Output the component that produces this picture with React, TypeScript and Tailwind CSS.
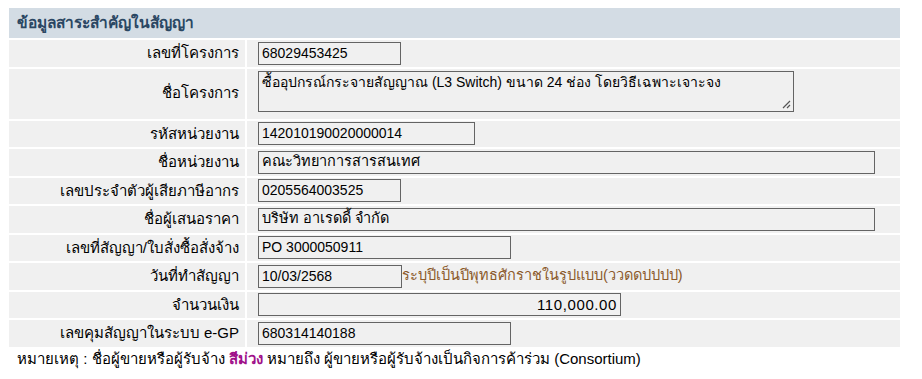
import React from "react";

const font = { fontFamily: '"Liberation Sans", Tahoma, sans-serif' };

function Row({label, children, tall}: {label: string; children: React.ReactNode; tall?: boolean}) {
  return (
    <div className={`grid grid-cols-[236px_1fr] gap-x-[2px] ${tall ? "h-[50px]" : "h-[26.5px]"}`}>
      <div className="bg-[#f0f0f0] flex items-center justify-end pr-[6px] text-[15px] text-black">{label}</div>
      <div className={`bg-[#f0f0f0] flex pl-[11px] ${tall ? "items-start pt-[2px]" : "items-center"}`}>{children}</div>
    </div>
  );
}

function Field({value, w, right, thai}: {value: string; w: string; right?: boolean; thai?: boolean}) {
  return (
    <div
      className={`${w} h-[23px] border border-[#646464] bg-[#f0f0f0] px-[3px] flex items-center ${thai ? "text-[14.5px]" : "text-[14px]"} ${right ? "justify-end" : ""}`}
    >
      {value}
    </div>
  );
}

export default function App() {
  return (
    <div className="bg-white w-[922px] h-[379px] pt-[8px] pl-[9px] text-[14px] text-black" style={font}>
      <div className="w-[891px] flex flex-col gap-y-[2px]">
        <div className="h-[30px] bg-[#d3dce4] flex items-center pl-[8px] font-bold text-[15.5px] text-[#2b4763]">
          ข้อมูลสาระสำคัญในสัญญา
        </div>
        <Row label="เลขที่โครงการ">
          <Field value="68029453425" w="w-[143px]" />
        </Row>
        <Row label="ชื่อโครงการ" tall>
          <div className="relative w-[536px] h-[41px] border border-[#646464] bg-[#f0f0f0] px-[3px] pt-[1px] leading-[18px]">
            ซื้ออุปกรณ์กระจายสัญญาณ (L3 Switch) ขนาด 24 ช่อง โดยวิธีเฉพาะเจาะจง
            <svg className="absolute right-[2px] bottom-[2px]" width="9" height="9" viewBox="0 0 9 9">
              <path d="M8 1L1 8M8 5L5 8" stroke="#555" strokeWidth="1.2" />
            </svg>
          </div>
        </Row>
        <Row label="รหัสหน่วยงาน">
          <Field value="142010190020000014" w="w-[217px]" />
        </Row>
        <Row label="ชื่อหน่วยงาน">
          <Field value="คณะวิทยาการสารสนเทศ" w="w-[617px]" thai />
        </Row>
        <Row label="เลขประจำตัวผู้เสียภาษีอากร">
          <Field value="0205564003525" w="w-[143px]" />
        </Row>
        <Row label="ชื่อผู้เสนอราคา">
          <Field value="บริษัท อาเรดดี้ จำกัด" w="w-[617px]" thai />
        </Row>
        <Row label="เลขที่สัญญา/ใบสั่งซื้อสั่งจ้าง">
          <Field value="PO 3000050911" w="w-[253px]" />
        </Row>
        <Row label="วันที่ทำสัญญา">
          <Field value="10/03/2568" w="w-[144px]" />
          <span className="text-[14.5px] text-[#8b5a2b]">ระบุปีเป็นปีพุทธศักราชในรูปแบบ(ววดดปปปป)</span>
        </Row>
        <Row label="จำนวนเงิน">
          <div className="w-[363px] h-[23px] border border-[#646464] bg-[#f0f0f0] px-[3px] flex items-center justify-end text-[15px] tracking-[0.6px]">
            110,000.00
          </div>
        </Row>
        <Row label="เลขคุมสัญญาในระบบ e-GP">
          <Field value="680314140188" w="w-[253px]" />
        </Row>
      </div>
      <p className="mt-[3px] pl-[8px] leading-[18px] text-[15px]">
        หมายเหตุ : ชื่อผู้ขายหรือผู้รับจ้าง <span className="font-bold text-[#a0108a]">สีม่วง</span> หมายถึง ผู้ขายหรือผู้รับจ้างเป็นกิจการค้าร่วม (Consortium)
      </p>
    </div>
  );
}
